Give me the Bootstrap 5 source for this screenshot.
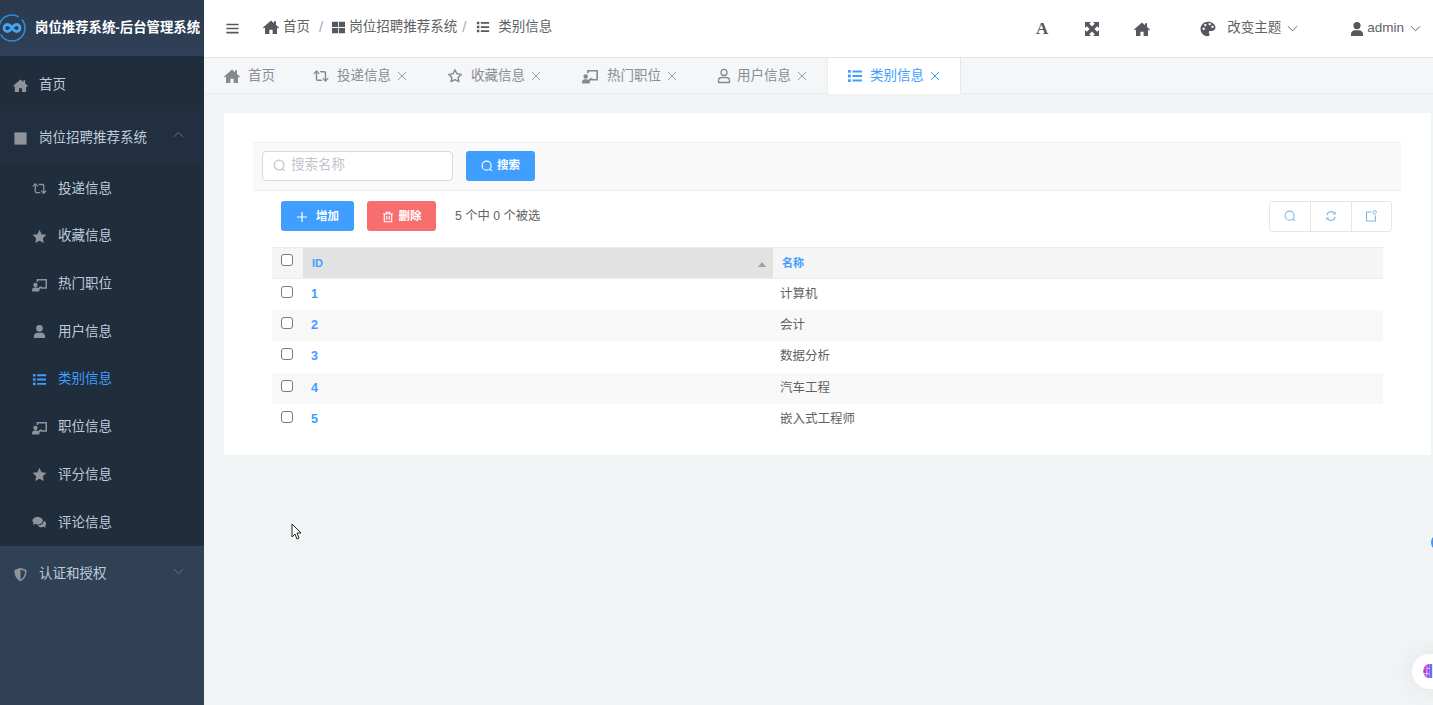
<!DOCTYPE html>
<html lang="zh-CN">
<head>
  <meta charset="UTF-8" />
  <meta name="viewport" content="width=device-width, initial-scale=1.0"/>
  <title>岗位推荐系统-后台管理系统</title>
  <link href="https://cdn.jsdelivr.net/npm/bootstrap@5.3.0/dist/css/bootstrap.min.css" rel="stylesheet" />
  <style>
    body {
      font-family: "Liberation Sans", "Noto Sans CJK SC", sans-serif;
      font-size: 13.5px;
      color: #606266;
      background: #f0f4f5;
      overflow: hidden;
    }
    .ico { width: 16px; height: 16px; fill: currentColor; flex: none; }

    /* sidebar */
    .side-bar { width: 204px; flex: none; background: #304156; color: #bfcbd9; }
    .side-logo { height: 56px; color: #fff; background: linear-gradient(#2b3a4e, #2f4058); overflow: hidden; }
    .side-logo svg { margin-left: -3px; width: 30px; height: 30px; flex: none; }
    .side-logo b { margin-left: 8px; font-size: 13.4px; white-space: nowrap; }
    .side-top { height: 54px; padding: 5px 20px 0 13px; background: #1f2d3d; }
    .side-top.is-open { background: #212f40; padding-top: 3px; }
    .side-top.is-plain { background: #304156; height: 57px; padding-top: 0; }
    .side-top .ico { color: #8f949b; width: 15px; height: 15px; margin-right: 11px; }
    .side-top .chev { color: #6d7885; width: 11px; height: 11px; margin: 0 0 8px auto; }
    .side-top.is-plain .chev { margin-bottom: 6px; }
    .side-sub { height: 47.7px; padding: 2px 0 0 32px; background: #1f2d3d; }
    .side-sub .ico { color: #8f949b; width: 15px; height: 15px; margin-right: 11px; }
    .side-sub.is-active, .side-sub.is-active .ico { color: #409eff; }

    /* top bar */
    .top-bar { height: 58px; background: #fff; border-bottom: 1px solid #e2e5ea; padding-left: 21px; flex: none; }
    .top-bar .ico { color: #55585e; }
    .menu-ico.ico { width: 15px; height: 15px; }
    .crumb-row { padding-bottom: 3px; margin-left: 23px; }
    .crumb-sep { color: #a8abb2; font-size: 15px; }
    .sep-one { margin: 0 9px 0 9px; }
    .sep-two { margin: 0 8px 0 5px; }
    .crumb-home { margin-right: 4px; }
    .crumb-grid.ico { width: 13px; height: 13px; margin-right: 4px; }
    .crumb-list.ico { width: 14px; height: 14px; margin: 0 8px 0 2px; }
    .font-a { font-family: "Liberation Serif", serif; font-weight: 700; font-size: 17px; color: #55585e; width: 16px; text-align: center; }
    .tool-a { margin-right: 34px; }
    .tool-home { margin-right: 50px; }
    .tool-palette { margin-right: 11px; }
    .tool-chev.ico { width: 11px; height: 11px; margin: 0 51px 0 6px; }
    .tool-user { margin-right: 2px; }
    .tool-chev.is-last.ico { margin: 0 12px 0 6px; }

    /* tabs */
    .tab-strip { height: 36px; background: #f4f6f8; border-bottom: 1px solid #e9edf0; flex: none; color: #8a8d93; }
    .tab-item { padding: 0 20px; height: 36px; white-space: nowrap; }
    .tab-item .ico { margin-right: 8px; color: #85888e; }
    .tab-item .tab-x { width: 10px; height: 10px; margin: 0 0 0 6px; color: #9a9da3; }
    .tab-item.is-home { padding-right: 18px; }
    .tab-item.is-hot { padding-left: 21px; }
    .tab-item.is-hot .ico:first-child { margin-right: 9px; }
    .tab-item.is-user { padding-left: 19px; }
    .tab-item.is-user .ico:first-child { margin-right: 5px; }
    .tab-item.is-active { background: #fff; color: #409eff; border-left: 1px solid #e9edf0; border-right: 1px solid #e4e7eb; padding: 0 20px 0 19px; }
    .tab-item.is-active .ico { color: #409eff; }
    .tab-item.is-active .ico:first-child { margin-right: 7px; }

    /* card */
    .page-main { padding: 19px 2px 0 20px; flex: 1; }
    .main-card { background: #fff; height: 342px; padding: 29px 30px 0 29px; }
    .search-strip { height: 49px; background: #f9f9f9; border-top: 1px solid #f0f0f0; border-bottom: 1px solid #ebeef0; padding: 0 0 2px 9px; gap: 13px; }
    .search-box { width: 191px; height: 30px; background: #fff; border: 1px solid #d5d8dc; border-radius: 4px; padding-left: 10px; color: #c0c4cc; }
    .search-box .ico { width: 13px; height: 13px; margin-right: 5px; }
    .search-box input { border: 0; outline: 0; padding: 0; width: 150px; font-size: 13.5px; background: transparent; }
    .search-box input::placeholder { color: #c0c4cc; opacity: 1; }
    .act-btn { height: 30px; border: 0; border-radius: 3px; color: #fff; font-size: 11.5px; font-weight: 700; padding: 0; }
    .act-btn:hover { color: #fff; }
    .act-blue, .act-blue:hover { background: #409eff; }
    .act-red, .act-red:hover { background: #f76e6e; }
    .act-btn .ico { width: 12px; height: 12px; }
    .w-search { width: 69px; gap: 4px; }
    .w-add { width: 73px; gap: 8px; padding-top: 1px; }
    .w-del { width: 69px; gap: 5px; margin-left: 13px; padding-top: 1px; }
    .tool-strip { height: 56px; padding: 0 9px 6px 28px; }
    .count-text { font-size: 12.3px; margin: 1px 0 0 19px; }
    .icon-group { height: 31px; border: 1px solid #e4e7ea; border-radius: 3px; color: #7fb8ea; }
    .icon-group span { width: 40.4px; height: 100%; border-left: 1px solid #e4e7ea; }
    .icon-group span:first-child { border-left: 0; }
    .icon-group .ico { width: 12px; height: 12px; }

    /* table */
    .table-wrap { padding-left: 19px; padding-right: 18px; }
    .data-table { width: 100%; table-layout: fixed; border-collapse: collapse; font-size: 12.5px; margin: 0; }
    .data-table th, .data-table td { padding: 0 8px; height: 31.5px; border: 0; vertical-align: middle; }
    .data-table th { background: #f5f5f6; height: 30.5px; font-size: 11px; color: #409eff; border-top: 1px solid #ececec; border-bottom: 1px solid #ececec; padding-left: 9px; }
    .data-table th.is-sorted { background: #e2e2e2; position: relative; }
    .sort-mark { position: absolute; right: 7px; top: 14px; width: 0; height: 0; border: 4px solid transparent; border-top: 0; border-bottom: 5px solid #9aa0a6; }
    .data-table tr.is-odd td { background: #f8f8f8; }
    .data-table .col-check { width: 31px; padding: 0 0 0 9px; }
    .data-table .col-id { width: 470px; }
    .data-table td.id-cell { color: #409eff; font-weight: 700; padding-left: 8px; font-size: 12.5px; }
    .data-table td.name-cell { padding-left: 7px; }
    .data-table .form-check-input { width: 12px; height: 12px; margin: 0 0 5px; border: 1px solid #7a7a7a; border-radius: 3px; display: block; }

    /* things lying over the page */
    .mouse-arrow { position: absolute; left: 291px; top: 523px; width: 11px; height: 17px; }
    .edge-dot { position: absolute; left: 1431px; top: 533px; width: 20px; height: 19px; border-radius: 50%; background: #4a90f0; }
    .edge-bubble { position: absolute; left: 1412px; top: 654px; width: 40px; height: 35px; border-radius: 18px; background: #fff; box-shadow: 0 0 26px rgba(0,0,0,.07); overflow: hidden; }
    .edge-bubble svg { position: absolute; left: 10px; top: 9px; width: 15px; height: 16px; }
  </style>
</head>
<body>
  <!-- ICONS -->
  <svg class="d-none" xmlns="http://www.w3.org/2000/svg">
    <symbol id="i-home" viewBox="0 0 16 16"><path d="M8 1.500 0 8.600l.8.900L2 8.500V15h4.400v-4.200h3.200V15H14V8.500l1.200 1 .8-.9-3-2.700V2.300h-2v2z"/></symbol>
    <symbol id="i-square" viewBox="0 0 16 16"><rect x="1.500" y="1.500" width="13" height="13"/></symbol>
    <symbol id="i-grid" viewBox="0 0 16 16"><path d="M0 1h7.500v6.500H0zM8.500 1H16v6.500H8.500zM0 8.500h7.500V15H0zM8.500 8.500H16V15H8.500z"/></symbol>
    <symbol id="i-retweet" viewBox="0 0 16 16"><path d="M3.500 2 .3 5.400l.9.800 1.600-1.600V11c0 1.200.8 2 2 2h4.700l-1.300-1.400H5c-.5 0-.8-.3-.8-.8V4.600l1.600 1.600.9-.8zM12.500 14l3.200-3.400-.9-.8-1.600 1.600V5c0-1.200-.8-2-2-2H6.500l1.300 1.400H11c.5 0 .8.300.8.800v6.200l-1.600-1.600-.9.800z"/></symbol>
    <symbol id="i-star" viewBox="0 0 16 16"><path d="m8 .8 2.200 4.700 5.100.7-3.700 3.600.9 5.100L8 12.500l-4.500 2.400.9-5.100L.7 6.200l5.100-.7z"/></symbol>
    <symbol id="i-star-o" viewBox="0 0 16 16"><path fill="none" stroke="currentColor" stroke-width="1.400" stroke-linejoin="round" d="m8 1.800 1.900 4 4.300.6-3.100 3 .7 4.300L8 11.700l-3.800 2 .7-4.300-3.100-3 4.300-.6z"/></symbol>
    <symbol id="i-board" viewBox="0 0 16 16"><path d="M5 2h11v10.500H9.500v-1.600h4.900V3.600H6.600v1.600H5zM3.700 6.200a2.300 2.300 0 1 1 0 4.600 2.300 2.300 0 0 1 0-4.600zM0 14.200c0-1.700 1.300-3 3-3h1.600c.8 0 1.300.2 1.900.6l2.200-1.800h2.100l-3 3.600v1.900H.6c-.3 0-.6-.3-.6-.6z"/></symbol>
    <symbol id="i-user" viewBox="0 0 16 16"><path d="M8 1a3.600 3.600 0 1 1 0 7.200A3.600 3.600 0 0 1 8 1zM2 15v-1.800C2 11 3.800 9.300 6 9.300h4c2.200 0 4 1.700 4 3.900V15z"/></symbol>
    <symbol id="i-user-o" viewBox="0 0 16 16"><g fill="none" stroke="currentColor" stroke-width="1.300"><circle cx="8" cy="4.400" r="3"/><path d="M2.500 14.500v-1.700c0-1.900 1.500-3.300 3.300-3.300h4.400c1.800 0 3.300 1.400 3.300 3.300v1.700z"/></g></symbol>
    <symbol id="i-list" viewBox="0 0 16 16"><path d="M1 2h2.800v2.800H1zM1 6.600h2.800v2.800H1zM1 11.200h2.800V14H1zM5.500 2.400H15v2H5.500zM5.500 7H15v2H5.500zM5.500 11.600H15v2H5.500z"/></symbol>
    <symbol id="i-comments" viewBox="0 0 16 16"><path d="M6 2C2.900 2 .5 3.800.5 6c0 1 .5 1.900 1.300 2.600L.9 10.500l2.600-1c.8.300 1.600.5 2.500.5 3.100 0 5.500-1.800 5.500-4S9.100 2 6 2zM12.400 6.200c.2 2.900-2.700 5-6 5l-.5-.1c.8 1.200 2.400 1.900 4.300 1.900.7 0 1.400-.1 2-.4l2.600 1-.9-1.900c.8-.7 1.200-1.500 1.200-2.500 0-1.300-1.100-2.500-2.700-3z"/></symbol>
    <symbol id="i-shield" viewBox="0 0 16 16"><path d="M8 .8 1.500 3.300c0 5.500 1.700 9.700 6.500 11.900 4.800-2.200 6.500-6.400 6.500-11.900zM8 13.300V2.700l4.800 1.800c-.1 4-1.300 7-4.800 8.800z"/></symbol>
    <symbol id="i-expand" viewBox="0 0 16 16"><path d="M1 1h6L5.200 2.800 8 5.600l2.800-2.800L9 1h6v6l-1.800-1.800L10.400 8l2.800 2.800L15 9v6H9l1.800-1.800L8 10.400l-2.800 2.800L7 15H1V9l1.800 1.800L5.600 8 2.800 5.200 1 7z"/></symbol>
    <symbol id="i-palette" viewBox="0 0 16 16"><path fill-rule="evenodd" d="M8 .8C3.800.8.500 4 .500 8s3.300 7.200 7.200 7.200c1.200 0 1.800-.8 1.800-1.700 0-1-.7-1.300-.7-2.200 0-.8.600-1.400 1.500-1.400h1.700c1.900 0 3.500-1.400 3.500-3.300C15.500 3.400 12 .8 8 .8zM3.700 8.900a1.200 1.200 0 1 1 0-2.400 1.200 1.200 0 0 1 0 2.400zM5.300 5.300a1.200 1.200 0 1 1 0-2.400 1.200 1.200 0 0 1 0 2.400zM9.700 4.300a1.200 1.200 0 1 1 0-2.400 1.200 1.200 0 0 1 0 2.400zM12.500 7a1.200 1.200 0 1 1 0-2.400 1.200 1.200 0 0 1 0 2.400z"/></symbol>
    <symbol id="i-menu" viewBox="0 0 16 16"><path d="M1.500 2.800h13v1.800h-13zM1.500 7.100h13v1.800h-13zM1.500 11.400h13v1.800h-13z"/></symbol>
    <symbol id="i-chev-down" viewBox="0 0 12 12"><path fill="none" stroke="currentColor" stroke-width="1" d="m1 3.500 5 5 5-5"/></symbol>
    <symbol id="i-chev-up" viewBox="0 0 12 12"><path fill="none" stroke="currentColor" stroke-width="1" d="m1 8.500 5-5 5 5"/></symbol>
    <symbol id="i-x" viewBox="0 0 10 10"><path fill="none" stroke="currentColor" stroke-width="1" d="m1 1 8 8M9 1 1 9"/></symbol>
    <symbol id="i-search" viewBox="0 0 16 16"><g fill="none" stroke="currentColor" stroke-width="1.500"><circle cx="7.500" cy="7.500" r="6"/><path d="m11.800 11.800 2.700 2.700"/></g></symbol>
    <symbol id="i-plus" viewBox="0 0 12 12"><path d="M5.400 1h1.200v4.400H11v1.200H6.600V11H5.400V6.600H1V5.400h4.400z"/></symbol>
    <symbol id="i-trash" viewBox="0 0 12 12"><path fill="none" stroke="currentColor" stroke-width="1.100" d="M1 3h10M4.200 3V1.300h3.600V3M2.300 3v7.700h7.400V3M4.800 5v3.800M7.200 5v3.800"/></symbol>
    <symbol id="i-refresh" viewBox="0 0 12 12"><path fill="none" stroke="currentColor" stroke-width="1.200" d="M2 5.200A4.100 4.100 0 0 1 9.500 3.500M10 6.800a4.100 4.100 0 0 1-7.500 1.700"/><path d="M10.600 1.500v3H7.800zM1.400 10.500v-3h2.800z"/></symbol>
    <symbol id="i-card" viewBox="0 0 12 12"><path fill="none" stroke="currentColor" stroke-width="1.100" d="M6.500 2H1.500v9h9V5.500"/><circle cx="9.700" cy="2.300" r="1.700" fill="none" stroke="currentColor"/></symbol>
  </svg>

  <div class="d-flex vh-100">
    <!-- SIDEBAR -->
    <aside class="side-bar d-flex flex-column">
      <div class="side-logo d-flex align-items-center">
        <svg viewBox="0 0 30 30"><circle cx="15" cy="15" r="13" fill="none" stroke="#2a8fdc" stroke-width="1.600" stroke-dasharray="34 4 30 4"/><path fill="none" stroke="#45a5ee" stroke-width="2.800" d="M15 15c-1.700-2.500-3-3.500-4.500-3.500a3.500 3.500 0 0 0 0 7c1.500 0 2.800-1 4.500-3.500s3-3.500 4.500-3.500a3.500 3.500 0 0 1 0 7c-1.500 0-2.800-1-4.500-3.500z"/></svg>
        <b>岗位推荐系统-后台管理系统</b>
      </div>
      <div class="side-top d-flex align-items-center"><svg class="ico"><use href="#i-home"/></svg>首页</div>
      <div class="side-top is-open d-flex align-items-center"><svg class="ico"><use href="#i-square"/></svg>岗位招聘推荐系统<svg class="chev"><use href="#i-chev-up"/></svg></div>
      <div class="side-sub d-flex align-items-center"><svg class="ico"><use href="#i-retweet"/></svg>投递信息</div>
      <div class="side-sub d-flex align-items-center"><svg class="ico"><use href="#i-star"/></svg>收藏信息</div>
      <div class="side-sub d-flex align-items-center"><svg class="ico"><use href="#i-board"/></svg>热门职位</div>
      <div class="side-sub d-flex align-items-center"><svg class="ico"><use href="#i-user"/></svg>用户信息</div>
      <div class="side-sub is-active d-flex align-items-center"><svg class="ico"><use href="#i-list"/></svg>类别信息</div>
      <div class="side-sub d-flex align-items-center"><svg class="ico"><use href="#i-board"/></svg>职位信息</div>
      <div class="side-sub d-flex align-items-center"><svg class="ico"><use href="#i-star"/></svg>评分信息</div>
      <div class="side-sub d-flex align-items-center"><svg class="ico"><use href="#i-comments"/></svg>评论信息</div>
      <div class="side-top is-plain d-flex align-items-center"><svg class="ico"><use href="#i-shield"/></svg>认证和授权<svg class="chev"><use href="#i-chev-down"/></svg></div>
    </aside>

    <div class="d-flex flex-column flex-grow-1">
      <!-- TOP BAR -->
      <header class="top-bar d-flex align-items-center">
        <svg class="ico menu-ico"><use href="#i-menu"/></svg>
        <div class="crumb-row d-flex align-items-center">
          <svg class="ico crumb-home"><use href="#i-home"/></svg>首页
          <span class="crumb-sep sep-one">/</span>
          <svg class="ico crumb-grid"><use href="#i-grid"/></svg>岗位招聘推荐系统
          <span class="crumb-sep sep-two">/</span>
          <svg class="ico crumb-list"><use href="#i-list"/></svg>类别信息
        </div>
        <div class="d-flex align-items-center ms-auto">
          <span class="font-a tool-a">A</span>
          <svg class="ico tool-a"><use href="#i-expand"/></svg>
          <svg class="ico tool-home"><use href="#i-home"/></svg>
          <svg class="ico tool-palette"><use href="#i-palette"/></svg>改变主题
          <svg class="ico tool-chev"><use href="#i-chev-down"/></svg>
          <svg class="ico tool-user"><use href="#i-user"/></svg>admin
          <svg class="ico tool-chev is-last"><use href="#i-chev-down"/></svg>
        </div>
      </header>

      <!-- TABS -->
      <div class="tab-strip d-flex">
        <div class="tab-item is-home d-flex align-items-center"><svg class="ico"><use href="#i-home"/></svg>首页</div>
        <div class="tab-item d-flex align-items-center"><svg class="ico"><use href="#i-retweet"/></svg>投递信息<svg class="ico tab-x"><use href="#i-x"/></svg></div>
        <div class="tab-item d-flex align-items-center"><svg class="ico"><use href="#i-star-o"/></svg>收藏信息<svg class="ico tab-x"><use href="#i-x"/></svg></div>
        <div class="tab-item is-hot d-flex align-items-center"><svg class="ico"><use href="#i-board"/></svg>热门职位<svg class="ico tab-x"><use href="#i-x"/></svg></div>
        <div class="tab-item is-user d-flex align-items-center"><svg class="ico"><use href="#i-user-o"/></svg>用户信息<svg class="ico tab-x"><use href="#i-x"/></svg></div>
        <div class="tab-item is-active d-flex align-items-center"><svg class="ico"><use href="#i-list"/></svg>类别信息<svg class="ico tab-x"><use href="#i-x"/></svg></div>
      </div>

      <!-- CONTENT -->
      <main class="page-main">
        <div class="main-card">
          <div class="search-strip d-flex align-items-center">
            <label class="search-box d-flex align-items-center m-0">
              <svg class="ico"><use href="#i-search"/></svg>
              <input type="text" placeholder="搜索名称" />
            </label>
            <button type="button" class="btn act-btn act-blue w-search d-flex align-items-center justify-content-center"><svg class="ico"><use href="#i-search"/></svg>搜索</button>
          </div>
          <div class="tool-strip d-flex align-items-center">
            <button type="button" class="btn act-btn act-blue w-add d-flex align-items-center justify-content-center"><svg class="ico"><use href="#i-plus"/></svg>增加</button>
            <button type="button" class="btn act-btn act-red w-del d-flex align-items-center justify-content-center"><svg class="ico"><use href="#i-trash"/></svg>删除</button>
            <span class="count-text">5 个中 0 个被选</span>
            <div class="icon-group d-flex ms-auto">
              <span class="d-flex align-items-center justify-content-center"><svg class="ico"><use href="#i-search"/></svg></span>
              <span class="d-flex align-items-center justify-content-center"><svg class="ico"><use href="#i-refresh"/></svg></span>
              <span class="d-flex align-items-center justify-content-center"><svg class="ico"><use href="#i-card"/></svg></span>
            </div>
          </div>
          <div class="table-wrap">
            <table class="data-table">
              <thead>
                <tr>
                  <th class="col-check"><input class="form-check-input" type="checkbox"/></th>
                  <th class="col-id is-sorted">ID<i class="sort-mark"></i></th>
                  <th>名称</th>
                </tr>
              </thead>
              <tbody>
                <tr><td class="col-check"><input class="form-check-input" type="checkbox"/></td><td class="id-cell">1</td><td class="name-cell">计算机</td></tr>
                <tr class="is-odd"><td class="col-check"><input class="form-check-input" type="checkbox"/></td><td class="id-cell">2</td><td class="name-cell">会计</td></tr>
                <tr><td class="col-check"><input class="form-check-input" type="checkbox"/></td><td class="id-cell">3</td><td class="name-cell">数据分析</td></tr>
                <tr class="is-odd"><td class="col-check"><input class="form-check-input" type="checkbox"/></td><td class="id-cell">4</td><td class="name-cell">汽车工程</td></tr>
                <tr><td class="col-check"><input class="form-check-input" type="checkbox"/></td><td class="id-cell">5</td><td class="name-cell">嵌入式工程师</td></tr>
              </tbody>
            </table>
          </div>
        </div>
      </main>
    </div>
  </div>

  <!-- CURSOR AND FLOATING WIDGETS -->
  <svg class="mouse-arrow" viewBox="0 0 11 17"><path fill="#fff" stroke="#222" stroke-width="1" d="M1 1v13l3-3 2 5 2-1-2-5h4z"/></svg>
  <div class="edge-dot"></div>
  <div class="edge-bubble">
    <svg viewBox="0 0 16 18"><path fill="#a63fe0" d="M8 1C4 1 1 4.500 1 9s3 8 7 8z"/><path fill="#4d7df0" d="M8 1h3v16H8z"/><path fill="none" stroke="#fff" stroke-width=".8" d="M1 6h7M1 12h7M5 3v12"/><path fill="#ee4fa8" d="M2 4.500h3v3H2z"/></svg>
  </div>

  <script src="https://cdn.jsdelivr.net/npm/bootstrap@5.3.0/dist/js/bootstrap.bundle.min.js"></script>
</body>
</html>
